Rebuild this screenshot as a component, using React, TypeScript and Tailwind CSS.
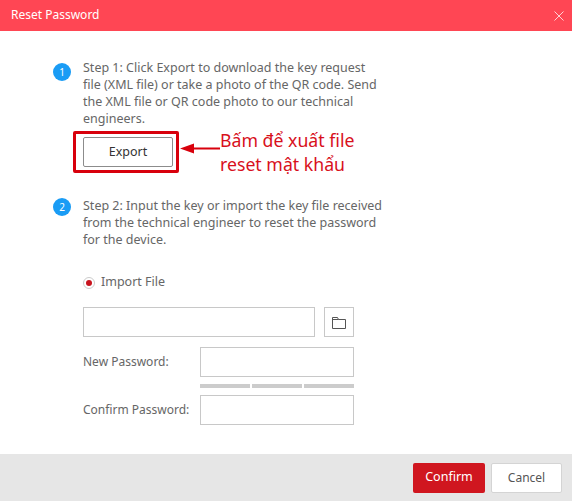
import React from "react";

function Step({ n, badge, children }: { n: number; badge: string; children: React.ReactNode }) {
  return (
    <div className="flex">
      <div className={`w-[18px] h-[18px] ${badge} rounded-full bg-[#1a9cf5] text-white text-[10px] leading-[18px] text-center shrink-0`}>{n}</div>
      <p className="ml-[12px] w-[301px] text-[12.5px] leading-[17px] text-[#666666]">{children}</p>
    </div>
  );
}

export default function App() {
  return (
    <div className="relative w-[572px] h-[501px] flex flex-col bg-white overflow-hidden font-['Noto_Sans','Open_Sans',sans-serif]">
      <header className="h-[31px] shrink-0 bg-[#ff4654] flex items-center justify-between pl-[11px] pr-[8px]">
        <span className="text-[12px] leading-[16px] -mt-[1px] text-white">Reset Password</span>
        <svg width="10" height="10" viewBox="0 0 10 10" className="stroke-[#ffd0d4]" fill="none" strokeWidth="1"><path d="M0.5 0.5L9.5 9.5M9.5 0.5L0.5 9.5" /></svg>
      </header>

      <main className="flex-1 pt-[28px] pl-[53px]">
        <Step n={1} badge="mt-[4px]">Step 1: Click Export to download the key request file (XML file) or take a photo of the QR code. Send the XML file or QR code photo to our technical engineers.</Step>
        <button className="block mt-[10px] ml-[30px] w-[90px] h-[30px] border border-[#8c8c8c] rounded-[2px] text-[12.5px] text-[#333333]">Export</button>

        <div className="mt-[30px]">
          <Step n={2} badge="mt-[1px]">Step 2: Input the key or import the key file received from the technical engineer to reset the password for the device.</Step>
        </div>

        <div className="mt-[26px] ml-[30px] flex items-center h-[17px]">
          <span className="w-[12px] h-[12px] rounded-full border border-[#cccccc] flex items-center justify-center">
            <span className="w-[6px] h-[6px] rounded-full bg-[#c8141e]" />
          </span>
          <span className="ml-[6px] text-[12.5px] text-[#666666]">Import File</span>
        </div>

        <div className="mt-[16px] ml-[30px] flex">
          <div className="w-[232px] h-[30px] border border-[#c8c8c8]" />
          <div className="ml-[9px] w-[30px] h-[30px] border border-[#c8c8c8] flex items-center justify-center">
            <svg width="16" height="13" viewBox="0 0 16 13" fill="none" stroke="#555555" strokeWidth="1"><path d="M1.5 12.5V1.5H6.5L7.5 3.5H14.5V12.5H1.5ZM1.5 3.5H7.5" /></svg>
          </div>
        </div>

        <div className="mt-[10px] ml-[30px] flex items-center">
          <span className="w-[117px] whitespace-nowrap text-[12px] text-[#666666]">New Password:</span>
          <div className="w-[154px] h-[30px] border border-[#c8c8c8]" />
        </div>
        <div className="mt-[7px] ml-[147px] w-[154px] h-[4px] flex gap-[2px]">
          <span className="flex-1 bg-[#cccccc]" />
          <span className="flex-1 bg-[#cccccc]" />
          <span className="flex-1 bg-[#cccccc]" />
        </div>
        <div className="mt-[7px] ml-[30px] flex items-center">
          <span className="w-[117px] whitespace-nowrap text-[12px] text-[#666666]">Confirm Password:</span>
          <div className="w-[154px] h-[30px] border border-[#c8c8c8]" />
        </div>
      </main>

      <footer className="h-[47px] shrink-0 bg-[#e6e6e6] flex items-center justify-end gap-[6px] pr-[10px]">
        <button className="w-[72px] h-[30px] rounded-[2px] bg-[#d0161f] text-white text-[12.5px]">Confirm</button>
        <button className="w-[71px] h-[30px] rounded-[2px] bg-white border border-[#d4d4d4] text-[#555555] text-[12px]">Cancel</button>
      </footer>

      <div className="absolute left-[73px] top-[131px] w-[106px] h-[42px] border-[3px] border-[#d8000c] rounded-[2px]" />
      <svg className="absolute left-[178px] top-[140px]" width="44" height="16" viewBox="0 0 44 16">
        <path d="M2 8.5L16 3.5V7.5H42V9.5H16V13.5Z" fill="#d8000c" />
      </svg>
      <div className="absolute left-[220px] top-[128px] text-[17.7px] leading-[24px] text-[#d8101c]">
        <div>Bấm để xuất file</div>
        <div>reset mật khẩu</div>
      </div>
    </div>
  );
}
